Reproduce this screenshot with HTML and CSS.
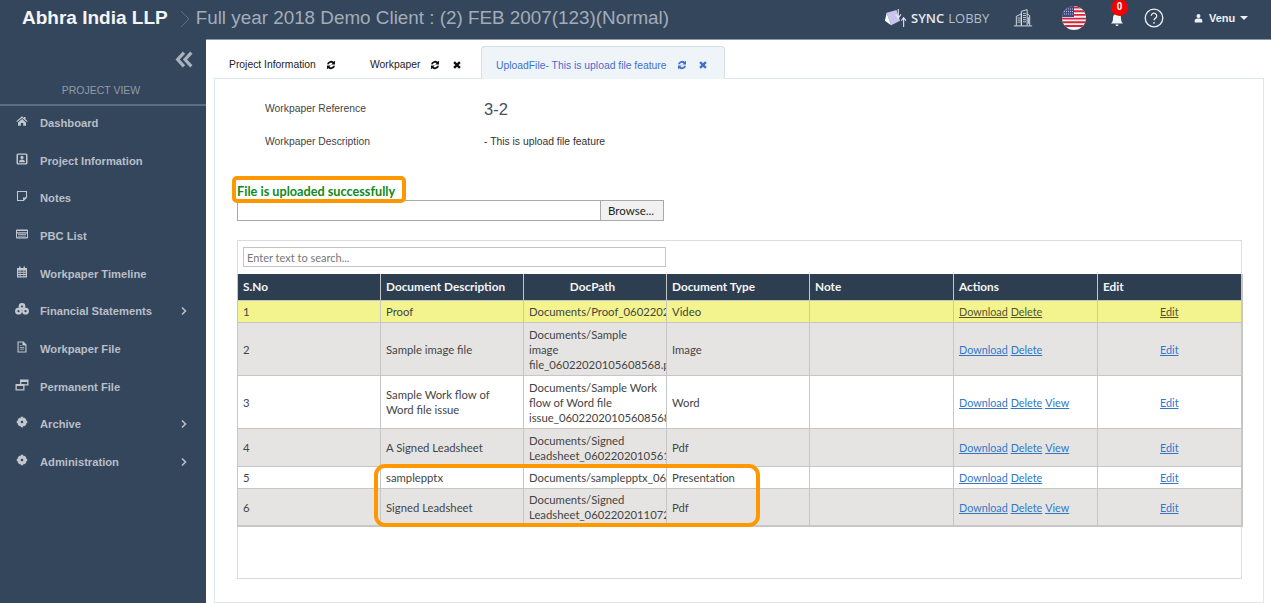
FILE: index.html
```html
<!DOCTYPE html>
<html lang="en">
<head>
<meta charset="utf-8">
<title>Upload File</title>
<link rel="stylesheet" href="styles.css">
</head>
<body>
<svg class="sprite" aria-hidden="true">
  <symbol id="i-refresh" viewBox="0 0 12 12"><path d="M1.200 5.200a4.900 4.900 0 0 1 8-3L10.800 .8V5.500H6.200L7.900 3.900A2.700 2.700 0 0 0 3.500 5.200ZM10.800 6.800a4.900 4.900 0 0 1-8 3L1.200 11.200V6.500H5.800L4.100 8.100A2.700 2.700 0 0 0 8.500 6.800Z"/></symbol>
  <symbol id="i-close" viewBox="0 0 12 12"><path d="M1.500 3.500L3.500 1.500 6 4 8.500 1.500 10.500 3.500 8 6 10.500 8.500 8.500 10.500 6 8 3.500 10.500 1.500 8.500 4 6Z"/></symbol>
  <symbol id="i-chevron" viewBox="0 0 8 12"><path d="M2 2.500L5.500 6 2 9.500" fill="none" stroke="currentColor" stroke-width="1.600"/></symbol>
  <symbol id="i-gear" viewBox="0 0 12 12"><path fill-rule="evenodd" d="M4.800.8h2.400l.3 1.500 1.100-.6 1.700 1.700-.6 1.100 1.500.3v2.400l-1.500.3.600 1.100-1.700 1.700-1.100-.6-.3 1.500H4.800l-.3-1.500-1.100.6-1.700-1.700.6-1.100L.8 7.200V4.800l1.500-.3-.6-1.100 1.700-1.700 1.100.6ZM6 4.700a1.300 1.300 0 1 0 0 2.600 1.300 1.300 0 0 0 0-2.600Z"/></symbol>
</svg>

<header class="topbar">
  <div class="crumbs">
    <span class="brand">Abhra India LLP</span>
    <svg class="crumb-sep" viewBox="0 0 10 20"><path d="M1 2L9 10 1 18" fill="none" stroke="#5f7084" stroke-width="1"/></svg>
    <span class="project">Full year 2018 Demo Client : (2) FEB 2007(123)(Normal)</span>
  </div>
  <div class="top-tools">
    <div class="sync">
      <svg class="sync-icon" viewBox="0 0 28 22"><path d="M3 5L14 2 18 14 8 19Z" fill="#c9c5ee"/><path d="M3 5L8 19 1 14Z" fill="#fff"/><path d="M16 1V10M13 7L16 11 19 7M22 21V11M19.500 14L22 10.500 24.500 14" fill="none" stroke="#e6e9ee" stroke-width="1.200"/></svg>
      <span class="sync-a">SYNC</span><span class="sync-b">LOBBY</span>
    </div>
    <svg class="building" viewBox="0 0 24 22"><path d="M1 20.500H23M4 20V9L10 6V20M10 20V3L17 1V20M17 6L20 8V20" fill="none" stroke="#e2e6ea" stroke-width="1.100"/><path d="M5.500 11H9M5.500 13.500H9M5.500 16H9M12 5.500H15.500M12 8H15.500M12 10.500H15.500M12 13H15.500M12 15.500H15.500M18.500 10V18" stroke="#e2e6ea" stroke-width="1"/></svg>
    <svg class="flag" viewBox="0 0 24 24">
      <defs><clipPath id="flag-clip"><circle cx="12" cy="12" r="12"/></clipPath></defs>
      <g clip-path="url(#flag-clip)">
        <rect width="24" height="24" fill="#f4f4f4"/>
        <path d="M0 1.500H24M0 5.200H24M0 8.900H24M0 12.600H24M0 16.300H24M0 20H24" stroke="#d3253c" stroke-width="1.900"/>
        <rect width="12" height="11" fill="#3b4a8a"/>
        <path d="M2 3H11M2 5.500H11M2 8H11" stroke="#cfd3e8" stroke-width=".9" stroke-dasharray="1 1"/>
      </g>
    </svg>
    <div class="bell-wrap">
      <svg class="bell" viewBox="0 0 14 14"><path d="M7 1a4 4 0 0 1 4 4c0 3 .5 4 2 5.500H1C2.500 9 3 8 3 5a4 4 0 0 1 4-4ZM5.500 11.500h3a1.500 1.500 0 0 1-3 0Z" fill="#f2f4f6"/></svg>
      <span class="badge">0</span>
    </div>
    <svg class="help" viewBox="0 0 20 20"><circle cx="10" cy="10" r="8.800" fill="none" stroke="#eef0f3" stroke-width="1.300"/><path d="M7.300 7.800a2.700 2.700 0 1 1 4.200 2.300c-1 .6-1.500 1.100-1.500 2.200" fill="none" stroke="#eef0f3" stroke-width="1.300"/><circle cx="10" cy="14.800" r=".9" fill="#eef0f3"/></svg>
    <div class="user">
      <svg class="user-icon" viewBox="0 0 10 10"><circle cx="5" cy="2.700" r="2.200"/><path d="M.8 10V7.800C.8 6 2.500 5.500 5 5.500s4.200.5 4.200 2.300V10Z"/></svg>
      <span>Venu</span>
      <span class="caret"></span>
    </div>
  </div>
</header>

<div class="shell">
  <aside class="sidebar">
    <div class="collapse-row">
      <svg class="collapse" viewBox="0 0 18 16"><path d="M8.500 1.500L2.500 8l6 6.500M15.500 1.500L9.500 8l6 6.500" fill="none" stroke="#a9b3bf" stroke-width="3"/></svg>
    </div>
    <div class="view-title">PROJECT VIEW</div>
    <nav class="menu">
      <a class="menu-item"><svg class="mi" viewBox="0 0 12 12"><path d="M6 1.200L.3 6.200l.7.800L6 2.900l5 4.100.7-.8-2.200-1.900V2H8v1.100ZM2 7.400L6 4.100l4 3.300v3.400H7.200V8H4.800v2.800H2Z"/></svg><span>Dashboard</span></a>
      <a class="menu-item"><svg class="mi" viewBox="0 0 12 12"><path fill-rule="evenodd" d="M2 .5h8A1.500 1.500 0 0 1 11.500 2v8A1.500 1.500 0 0 1 10 11.500H2A1.500 1.500 0 0 1 .5 10V2A1.500 1.500 0 0 1 2 .5Zm0 1.200V10.300h8V1.700ZM6 2.800a1.600 1.600 0 1 1 0 3.200 1.600 1.600 0 0 1 0-3.200ZM3 9.300c0-2 1.300-2.800 3-2.800s3 .8 3 2.800Z"/></svg><span>Project Information</span></a>
      <a class="menu-item"><svg class="mi" viewBox="0 0 12 12"><path d="M1.500 1.500H10.500V7.500L7.500 10.500H1.500Z" fill="none" stroke="currentColor" stroke-width="1.100"/><path d="M7 10.500V7.500H10.500Z"/></svg><span>Notes</span></a>
      <a class="menu-item"><svg class="mi mi-wide" viewBox="0 0 13 12"><path fill-rule="evenodd" d="M1.500 1.500H11.500A1 1 0 0 1 12.500 2.500V9.500A1 1 0 0 1 11.500 10.500H1.500A1 1 0 0 1 .5 9.500V2.500A1 1 0 0 1 1.500 1.500ZM1.500 3V4.200H11.500V3ZM1.500 5.500V9.200H11.500V5.500Z"/><path d="M2.500 6.300H10.500V7H2.500ZM2.500 7.700H10.500V8.400H2.500Z"/></svg><span>PBC List</span></a>
      <a class="menu-item"><svg class="mi" viewBox="0 0 12 12"><path d="M3 .5H4.500V2H7.500V.5H9V2H11V11.500H1V2H3ZM2.200 4.500V5.800H3.700V4.500ZM4.500 4.500V5.800H7.500V4.500ZM8.300 4.500V5.800H9.800V4.500ZM2.200 6.800V8H3.700V6.800ZM4.500 6.800V8H7.500V6.800ZM8.300 6.800V8H9.800V6.800ZM2.200 9V10.300H3.700V9ZM4.500 9V10.300H7.500V9ZM8.300 9V10.300H9.800V9Z" fill-rule="evenodd"/></svg><span>Workpaper Timeline</span></a>
      <a class="menu-item"><svg class="mi mi-wide" viewBox="0 0 14 12"><circle cx="7" cy="3.500" r="3.400"/><circle cx="3.500" cy="8.200" r="3.400"/><circle cx="10.500" cy="8.200" r="3.400"/><circle cx="7" cy="3.500" r="1.100" fill="#34465c"/><circle cx="3.500" cy="8.200" r="1.100" fill="#34465c"/><circle cx="10.500" cy="8.200" r="1.100" fill="#34465c"/></svg><span>Financial Statements</span><svg class="chev"><use href="#i-chevron"/></svg></a>
      <a class="menu-item"><svg class="mi" viewBox="0 0 12 12"><path fill-rule="evenodd" d="M1.500 .5H7.500L10.500 3.500V11.500H1.500ZM2.600 1.600V10.400H9.400V4.500H6.500V1.600ZM3.800 6H8.200V6.800H3.800ZM3.800 7.800H8.200V8.600H3.800ZM3.800 4.200H5.500V5H3.800Z"/></svg><span>Workpaper File</span></a>
      <a class="menu-item"><svg class="mi mi-wide" viewBox="0 0 14 12"><path fill-rule="evenodd" d="M5 .5H13.500V6.500H9.500V11.500H.5V5H5ZM6.300 3V5H9.500V5.300H12.200V3ZM1.800 7V10.300H8.200V7Z"/></svg><span>Permanent File</span></a>
      <a class="menu-item"><svg class="mi"><use href="#i-gear"/></svg><span>Archive</span><svg class="chev"><use href="#i-chevron"/></svg></a>
      <a class="menu-item"><svg class="mi"><use href="#i-gear"/></svg><span>Administration</span><svg class="chev"><use href="#i-chevron"/></svg></a>
    </nav>
  </aside>

  <main class="content">
    <div class="tabs">
      <div class="tab"><span>Project Information</span><svg class="ti"><use href="#i-refresh"/></svg></div>
      <div class="tab"><span>Workpaper</span><svg class="ti"><use href="#i-refresh"/></svg><svg class="ti"><use href="#i-close"/></svg></div>
      <div class="tab tab-active"><span>UploadFile- This is upload file feature</span><svg class="ti"><use href="#i-refresh"/></svg><svg class="ti"><use href="#i-close"/></svg></div>
    </div>
    <section class="panel">
      <div class="meta">
        <div class="meta-row"><span class="meta-label">Workpaper Reference</span><span class="meta-ref">3-2</span></div>
        <div class="meta-row"><span class="meta-label">Workpaper Description</span><span class="meta-desc">- This is upload file feature</span></div>
      </div>

      <div class="status">File is uploaded successfully<span class="mark mark-status"></span></div>
      <div class="file-row">
        <div class="file-box"></div>
        <button class="browse" type="button">Browse...</button>
      </div>

      <div class="grid-box">
        <input class="search" type="text" placeholder="Enter text to search...">
        <table class="docs">
          <thead>
            <tr><th>S.No</th><th>Document Description</th><th class="center">DocPath</th><th>Document Type</th><th>Note</th><th>Actions</th><th>Edit</th></tr>
          </thead>
          <tbody>
            <tr class="r-high h22"><td>1</td><td>Proof</td><td><div class="path">Documents/Proof_06022020105608568.mp4</div></td><td>Video</td><td></td><td><a>Download</a> <a>Delete</a></td><td class="center"><a>Edit</a></td></tr>
            <tr class="r-alt h53"><td>2</td><td>Sample image file</td><td><div class="path">Documents/Sample image file_06022020105608568.png</div></td><td>Image</td><td></td><td><a>Download</a> <a>Delete</a></td><td class="center"><a>Edit</a></td></tr>
            <tr class="h53"><td>3</td><td>Sample Work flow of Word file issue</td><td><div class="path">Documents/Sample Work flow of Word file issue_06022020105608568.docx</div></td><td>Word</td><td></td><td><a>Download</a> <a>Delete</a> <a>View</a></td><td class="center"><a>Edit</a></td></tr>
            <tr class="r-alt h38"><td>4</td><td>A Signed Leadsheet</td><td><div class="path">Documents/Signed Leadsheet_06022020105611758.pdf</div></td><td>Pdf</td><td></td><td><a>Download</a> <a>Delete</a> <a>View</a></td><td class="center"><a>Edit</a></td></tr>
            <tr class="h22"><td>5</td><td>samplepptx</td><td><div class="path">Documents/samplepptx_06022020110725.pptx</div></td><td>Presentation</td><td></td><td><a>Download</a> <a>Delete</a></td><td class="center"><a>Edit</a></td></tr>
            <tr class="r-alt h38"><td>6</td><td>Signed Leadsheet</td><td><div class="path">Documents/Signed Leadsheet_06022020110725123.pdf</div></td><td>Pdf</td><td></td><td><a>Download</a> <a>Delete</a> <a>View</a></td><td class="center"><a>Edit</a></td></tr>
          </tbody>
        </table>
        <span class="mark mark-rows"></span>
      </div>
    </section>
  </main>
</div>
</body>
</html>
```
FILE: styles.css
```css
* { box-sizing: border-box; }
html, body { margin: 0; height: 603px; overflow: hidden; }
body { font-family: "Liberation Sans", Arial, sans-serif; background: #34465c; color: #333; }
.sprite { display: none; }

.topbar { height: 39px; background: #34465c; display: flex; align-items: center; justify-content: space-between; padding: 0 11px 0 22px; }
.crumbs { display: flex; align-items: center; margin-top: -4px; }
.brand { font-size: 19px; font-weight: 700; color: #f4f5f7; }
.crumb-sep { width: 10px; height: 20px; margin: 2px 6px 0 12px; }
.project { font-size: 18.850px; color: #a3adb9; }
.top-tools { display: flex; align-items: center; color: #eef0f3; margin-top: -4px; }
.sync { display: flex; align-items: center; width: 129px; font-family: "Open Sans", sans-serif; font-size: 13px; }
.sync-icon { width: 25px; height: 22px; margin-right: 2px; flex: none; }
.sync-a { font-weight: 600; color: #e6e9ee; margin-right: 4px; }
.sync-b { color: #b6bec8; }
.building { width: 20px; height: 20px; margin-right: 29px; }
.flag { width: 24px; height: 24px; margin-right: 24px; }
.bell-wrap { position: relative; width: 14px; height: 14px; margin-right: 20px; margin-top: 5px; }
.bell { width: 14px; height: 14px; display: block; }
.badge { position: absolute; left: 1px; top: -14px; width: 17px; height: 17px; border-radius: 50%; background: #f50000; color: #fff; font-size: 10px; font-weight: 700; text-align: center; line-height: 15px; }
.help { width: 20px; height: 20px; margin-right: 30px; }
.user { display: flex; align-items: center; width: 66px; font-size: 11px; font-weight: 700; }
.user-icon { width: 9px; height: 10px; fill: #eef0f3; margin-right: 6px; }
.caret { width: 0; height: 0; margin-left: 5px; border-left: 4px solid transparent; border-right: 4px solid transparent; border-top: 4px solid #eef0f3; }

.shell { display: flex; height: 564px; }
.sidebar { width: 206px; flex: none; background: #34465c; }
.collapse-row { display: flex; justify-content: flex-end; padding: 12px 12px 0 0; height: 41px; }
.collapse { width: 19px; height: 17px; }
.view-title { height: 26px; padding-right: 4px; border-bottom: 2px solid #5a6e86; text-align: center; font-size: 10.500px; color: #8f9ba9; line-height: 21px; }
.menu { margin-top: -2px; }
.menu-item { display: flex; align-items: center; height: 37.700px; padding-left: 16px; color: #b9bfc7; font-size: 11.200px; font-weight: 700; }
.menu-item span { flex: 1; }
.mi { width: 12px; height: 12px; margin-right: 12px; margin-top: -4px; fill: #c3c8cf; color: #c3c8cf; flex: none; }
.mi-wide { width: 14px; margin-left: -1px; margin-right: 11px; }
.chev { width: 8px; height: 12px; margin-right: 18px; color: #b9bfc7; }

.content { flex: 1; background: #fff; border-top: 1px solid #8d9aaa; padding: 6px 7px 0 8px; min-width: 0; }
.tabs { display: flex; height: 32px; position: relative; z-index: 1; }
.tab { display: flex; align-items: center; font-size: 10.350px; color: #222; padding: 5px 0 0 15px; }
.tab:nth-child(1) { width: 141px; }
.tab:nth-child(2) { width: 126px; }
.tab span { margin-right: 10px; }
.ti { width: 10px; height: 10px; margin-right: 12px; fill: #111; flex: none; }
.tab-active { width: 244px; height: 33px; padding-left: 14px; background: #eff4f9; border: 1px solid #d6dee6; border-bottom: 1px solid #eff4f9; border-radius: 4px 4px 0 0; color: #3f6fd0; }
.tab-active .ti { fill: #3f6fd0; margin-right: 11px; }
.panel { height: 525px; border: 1px solid #dfe5ec; padding: 0 22px; background: #fff; }

.meta { padding: 13px 0 0 28px; font-size: 10.350px; color: #333; }
.meta-row { display: flex; align-items: center; height: 33px; }
.meta-label { width: 219px; flex: none; color: #444; }
.meta-ref { font-size: 16.500px; color: #44505e; padding-top: 1px; }
.meta-desc { color: #333; }

.status { position: relative; margin-top: 25px; padding-bottom: 1px; font-family: Lato, sans-serif; font-size: 12.700px; font-weight: 700; line-height: 16px; color: #0f8a1c; width: max-content; }
.file-row { display: flex; height: 21px; }
.file-box { width: 363px; border: 1px solid #a9a9a9; border-right: 0; background: #fff; }
.browse { width: 64px; height: 21px; padding: 0 2px 0 0; border: 1px solid #a9a9a9; background: #f1f1f1; font-family: Lato, sans-serif; font-size: 11.500px; color: #222; }

.grid-box { position: relative; margin-top: 19px; width: 1005px; height: 339px; border: 1px solid #dcdcdc; }
.search { display: block; width: 423px; height: 20px; margin: 6px 0 7px 5px; padding: 0 3px; border: 1px solid #c4c4c4; font-family: Lato, sans-serif; font-size: 11px; color: #555; outline: none; }
.search::placeholder { color: #777; }
.docs { width: 1004px; margin-left: -1px; table-layout: fixed; border-collapse: collapse; font-family: Lato, sans-serif; font-size: 11.300px; color: #444; border-right: 2px solid #c6c6c6; border-bottom: 2px solid #c6c6c6; }
.docs th { width: 143px; height: 26px; background: #2e3e51; color: #f3f5f7; text-align: left; font-size: 11.800px; font-weight: 700; padding: 0 5px; border: 1px solid #c6c6c6; border-top: 0; }
.docs th:nth-child(n+5) { width: 144px; }
.docs th:nth-child(n+6) { width: 144px; }
.docs td { padding: 1px 0 0 5px; border: 1px solid #c6c6c6; overflow: hidden; line-height: 15px; }
.docs td:nth-child(2) { padding-right: 7px; }
.docs .center { text-align: center; padding-left: 0; }
.docs tr.h22 td { height: 22px; }
.docs tr.h53 td { height: 53px; }
.docs tr.h38 td { height: 38px; }
.r-alt td { background: #e6e4e3; }
.r-high td { background: #f3f48e; }
.docs a { font-size: 10.800px; color: #2f78c8; text-decoration: underline; }
.r-high a { color: #55552c; }
.path { width: 130px; }
.h22 .path { white-space: nowrap; }

.mark { position: absolute; border: 4px solid #ff9800; pointer-events: none; }
.mark-status { left: -5px; top: -7px; width: 174px; height: 27px; border-radius: 5px; }
.mark-rows { left: 136px; top: 223px; width: 386px; height: 63px; border-radius: 11px; }
```
